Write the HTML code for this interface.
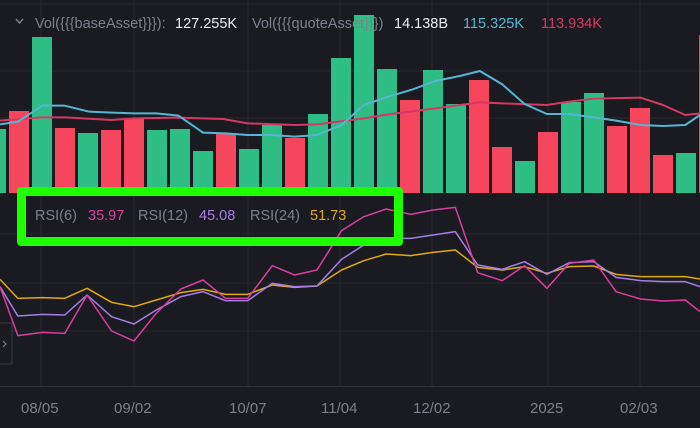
<!DOCTYPE html>
<html><head><meta charset="utf-8"><style>
html,body{margin:0;padding:0;background:#1a1b20;}
#c{position:relative;width:700px;height:428px;overflow:hidden;background:#1a1b20;font-family:"Liberation Sans",sans-serif;}
svg{position:absolute;left:0;top:0;}
.t{position:absolute;font-size:14.5px;white-space:nowrap;line-height:16px;}
.d{font-size:15px;}
.g{color:#7a808c}
</style></head><body><div id="c">
<svg width="700" height="428" viewBox="0 0 700 428">
<g stroke="#262830" stroke-width="1">
<line x1="0" y1="4" x2="700" y2="4"/><line x1="0" y1="71" x2="700" y2="71"/><line x1="0" y1="118" x2="700" y2="118"/>
<line x1="0" y1="234" x2="700" y2="234"/><line x1="0" y1="283" x2="700" y2="283"/><line x1="0" y1="331" x2="700" y2="331"/>
<line x1="41" y1="0" x2="41" y2="386"/><line x1="134" y1="0" x2="134" y2="386"/><line x1="248" y1="0" x2="248" y2="386"/>
<line x1="340" y1="0" x2="340" y2="386"/><line x1="432" y1="0" x2="432" y2="386"/><line x1="548" y1="0" x2="548" y2="386"/><line x1="640" y1="0" x2="640" y2="386"/>
</g>
<line x1="0" y1="386.5" x2="700" y2="386.5" stroke="#2e3038"/>
<g>
<rect x="-14" y="129" width="20" height="64" fill="#2ebd85"/>
<rect x="9" y="111" width="20" height="82" fill="#f6465d"/>
<rect x="32" y="37" width="20" height="156" fill="#2ebd85"/>
<rect x="55" y="128" width="20" height="65" fill="#f6465d"/>
<rect x="78" y="133" width="20" height="60" fill="#2ebd85"/>
<rect x="101" y="130" width="20" height="63" fill="#f6465d"/>
<rect x="124" y="119" width="20" height="74" fill="#f6465d"/>
<rect x="147" y="130" width="20" height="63" fill="#2ebd85"/>
<rect x="170" y="129" width="20" height="64" fill="#2ebd85"/>
<rect x="193" y="151" width="20" height="42" fill="#2ebd85"/>
<rect x="216" y="134" width="20" height="59" fill="#f6465d"/>
<rect x="239" y="149" width="20" height="44" fill="#2ebd85"/>
<rect x="262" y="125" width="20" height="68" fill="#2ebd85"/>
<rect x="285" y="138" width="20" height="55" fill="#f6465d"/>
<rect x="308" y="114" width="20" height="79" fill="#2ebd85"/>
<rect x="331" y="58" width="20" height="135" fill="#2ebd85"/>
<rect x="354" y="15" width="20" height="178" fill="#2ebd85"/>
<rect x="377" y="69" width="20" height="124" fill="#2ebd85"/>
<rect x="400" y="100" width="20" height="93" fill="#f6465d"/>
<rect x="423" y="70" width="20" height="123" fill="#2ebd85"/>
<rect x="446" y="104" width="20" height="89" fill="#2ebd85"/>
<rect x="469" y="80" width="20" height="113" fill="#f6465d"/>
<rect x="492" y="147" width="20" height="46" fill="#f6465d"/>
<rect x="515" y="161" width="20" height="32" fill="#2ebd85"/>
<rect x="538" y="132" width="20" height="61" fill="#f6465d"/>
<rect x="561" y="102" width="20" height="91" fill="#2ebd85"/>
<rect x="584" y="93" width="20" height="100" fill="#2ebd85"/>
<rect x="607" y="126" width="20" height="67" fill="#f6465d"/>
<rect x="630" y="108" width="20" height="85" fill="#f6465d"/>
<rect x="653" y="155" width="20" height="38" fill="#f6465d"/>
<rect x="676" y="153" width="20" height="40" fill="#2ebd85"/>
<rect x="699" y="35" width="20" height="158" fill="#f6465d"/>
</g>
<path d="M0 323 H12 V364 H0" fill="#1a1b20" stroke="#3a3d45" stroke-width="1"/>
<path d="M3 341 L6 344 L3 347" fill="none" stroke="#7a808c" stroke-width="1.2"/>
<path d="M16 19 L19.5 23 L23 19" fill="none" stroke="#7a808c" stroke-width="1.4"/>
</svg>
<svg width="700" height="428" viewBox="0 0 1568 1284" preserveAspectRatio="none">
<g fill="none" stroke-width="2" stroke-linejoin="round">
<polyline vector-effect="non-scaling-stroke" stroke="#d63864" points="0,362 95,352 145,352 250,360 300,355 400,353 500,357 555,370 660,375 710,373 815,355 870,343 975,325 1075,307 1125,310 1225,315 1275,305 1330,296 1435,293 1485,315 1535,345 1568,340"/>
<polyline vector-effect="non-scaling-stroke" stroke="#56b6d2" points="0,373 40,365 95,317 145,317 200,335 250,338 300,340 350,340 400,347 455,398 505,400 555,405 610,405 660,410 710,405 765,375 815,315 870,290 925,268 975,243 1030,228 1075,213 1125,253 1175,312 1225,342 1275,342 1330,352 1380,362 1435,375 1485,378 1535,375 1568,345"/>
</g>
<g fill="none" stroke-width="1.5" stroke-linejoin="round" transform="translate(0,540)">
<polyline vector-effect="non-scaling-stroke" stroke="#e0a80f" points="0,298 40,355 95,353 145,355 195,325 250,367 300,380 350,360 405,338 455,328 505,343 555,343 610,315 660,322 710,318 765,270 815,242 865,222 920,227 970,217 1020,210 1070,262 1125,270 1175,260 1225,280 1275,260 1330,258 1380,283 1435,290 1485,290 1535,290 1568,297"/>
<polyline vector-effect="non-scaling-stroke" stroke="#a57ee5" points="0,320 40,408 95,403 145,405 195,345 250,410 300,432 350,390 405,350 455,335 505,362 555,362 610,310 660,320 710,318 765,238 815,195 865,175 920,175 970,165 1020,155 1070,255 1125,268 1175,245 1225,283 1275,248 1330,245 1380,292 1435,302 1485,305 1535,305 1568,320"/>
<polyline vector-effect="non-scaling-stroke" stroke="#d63fa0" points="0,320 40,467 95,457 145,460 195,345 250,453 300,483 350,400 405,327 455,300 505,355 555,355 610,257 660,285 710,270 765,152 815,110 865,87 920,103 970,90 1020,82 1070,278 1125,302 1175,257 1225,325 1275,250 1330,240 1380,335 1435,357 1485,363 1535,360 1568,395"/>
</g>
</svg>
<div class="t g" style="left:35px;top:16px">Vol({{{baseAsset}}}):</div>
<div class="t" style="left:175px;top:16px;color:#eaecef">127.255K</div>
<div class="t g" style="left:252px;top:16px">Vol({{{quoteAsset}}})</div>
<div class="t" style="left:394px;top:16px;color:#eaecef">14.138B</div>
<div class="t" style="left:463px;top:16px;color:#56b6d2">115.325K</div>
<div class="t" style="left:541px;top:16px;color:#d63864">113.934K</div>
<div style="position:absolute;left:17px;top:187px;width:368px;height:41px;border:9px solid #1eff00;border-radius:4px;"></div>
<div class="t g" style="left:35px;top:208px">RSI(6)</div>
<div class="t" style="left:88px;top:208px;color:#d63fa0">35.97</div>
<div class="t g" style="left:138px;top:208px">RSI(12)</div>
<div class="t" style="left:199px;top:208px;color:#a57ee5">45.08</div>
<div class="t g" style="left:250px;top:208px">RSI(24)</div>
<div class="t" style="left:310px;top:208px;color:#e0a80f">51.73</div>
<div class="t g d" style="left:21px;top:401px">08/05</div>
<div class="t g d" style="left:114px;top:401px">09/02</div>
<div class="t g d" style="left:229px;top:401px">10/07</div>
<div class="t g d" style="left:321px;top:401px">11/04</div>
<div class="t g d" style="left:413px;top:401px">12/02</div>
<div class="t g d" style="left:530px;top:401px">2025</div>
<div class="t g d" style="left:620px;top:401px">02/03</div>
</div></body></html>
